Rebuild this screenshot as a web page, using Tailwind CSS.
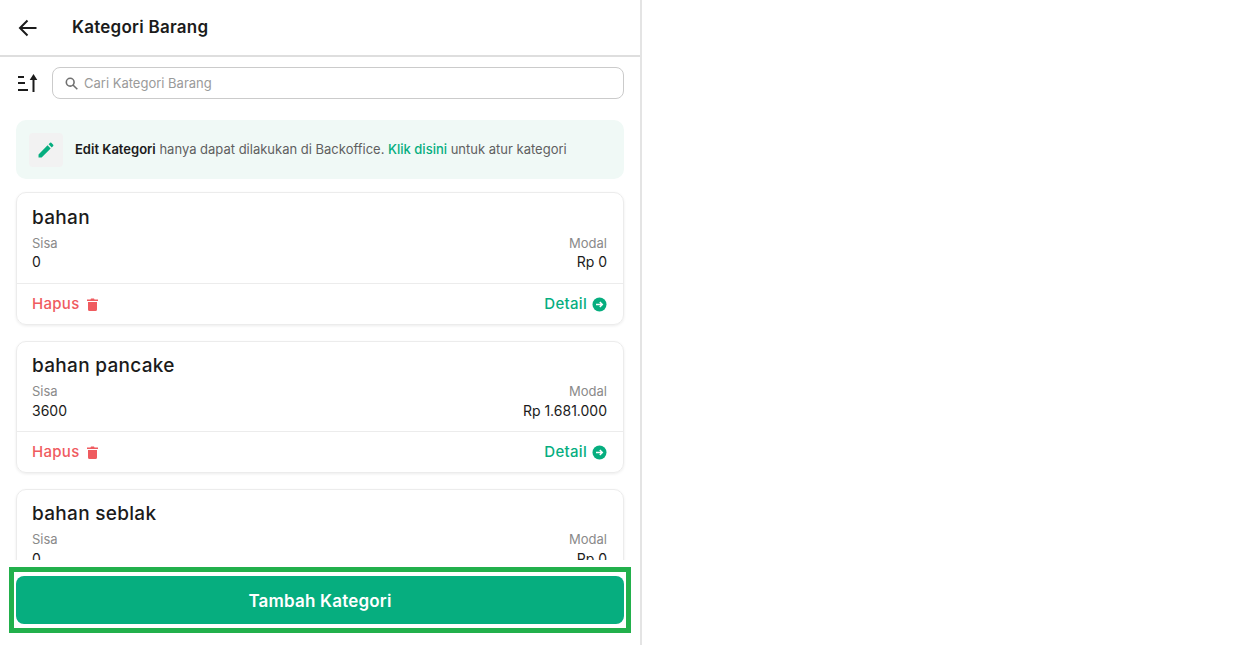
<!DOCTYPE html>
<html lang="en">
<head>
    <meta charset="UTF-8">
    <title>Kategori Barang</title>
    <script src="https://cdn.jsdelivr.net/npm/@tailwindcss/browser@4"></script>
</head>
<body class="bg-white h-screen overflow-hidden font-['Inter',sans-serif] text-[#1b1b1b]">
    <div class="w-[642px] h-[645px] border-r-2 border-[#e4e4e4] flex flex-col">
        <!-- header -->
        <div class="h-[57px] shrink-0 border-b-2 border-[#dedede] flex items-center pl-[18px]">
            <svg class="w-[20px] h-[20px]" viewBox="0 0 20 20" fill="none" stroke="#1b1b1b" stroke-width="2"><path d="M18.5 10H2.5M9.5 2.5L2 10l7.5 7.5"/></svg>
            <h1 class="ml-[34px] text-[17px] font-semibold tracking-[0.25px]">Kategori Barang</h1>
        </div>

        <div class="flex-1 overflow-hidden px-4">
            <!-- search -->
            <div class="flex items-center h-[32px] mt-[10px] gap-[13px]">
                <svg class="w-[23px] h-[20px] shrink-0" viewBox="0 0 23 20" fill="#1b1b1b"><rect x="2" y="3" width="6" height="2"/><rect x="2" y="9" width="7" height="2"/><rect x="2" y="16" width="10" height="2"/><path d="M16.500 19V6h2v13zM17.500 1l3.800 6h-7.600z"/></svg>
                <div class="flex-1 h-[32px] border-[1.5px] border-[#cbcbcb] rounded-[8px] flex items-center pl-[12px] gap-[6px]">
                    <svg class="w-[13px] h-[13px]" viewBox="0 0 13 13" fill="none" stroke="#707070" stroke-width="1.6"><circle cx="5.2" cy="5.2" r="3.9"/><path d="M8 8l4.3 4.3"/></svg>
                    <span class="text-[13px] text-[#9a9a9a] pt-[2px]">Cari Kategori Barang</span>
                </div>
            </div>

            <!-- info banner -->
            <div class="mt-[21px] h-[59px] bg-[#f0f9f6] rounded-[10px] flex items-center pl-[13px] gap-[12px]">
                <div class="w-[34px] h-[34px] bg-[#f2f2f2] rounded-[4px] flex items-center justify-center">
                    <svg class="w-[17px] h-[17px]" viewBox="0 0 16 16" fill="#06ae7f"><path d="M.5 12.6V15.5h2.9l8.5-8.5-2.9-2.9zM14.3 4.6a.8.8 0 000-1.1L12.5 1.7a.8.8 0 00-1.1 0L10 3.1 12.9 6z"/></svg>
                </div>
                <p class="text-[13px] text-[#5f5f5f]"><b class="font-semibold text-[#1b1b1b]">Edit Kategori</b> hanya dapat dilakukan di Backoffice. <span class="text-[#06ae7f] font-medium">Klik disini</span> untuk atur kategori</p>
            </div>

            <!-- cards -->
            <div class="mt-[13px] flex flex-col gap-[16px]">
                <div class="h-[133px] shrink-0 border border-[#ececec] rounded-[10px] shadow-[0_1px_3px_rgba(0,0,0,0.08)]">
                    <div class="h-[91px] pl-[15px] pr-[16px] pt-[12px] border-b border-[#ececec]">
                        <div class="text-[19px] font-medium leading-[26px] tracking-[0.3px]">bahan</div>
                        <div class="flex justify-between text-[13px] text-[#8a8a8a] mt-[3px] leading-[18px]"><span>Sisa</span><span>Modal</span></div>
                        <div class="flex justify-between text-[14px] leading-[20px]"><span>0</span><span>Rp 0</span></div>
                    </div>
                    <div class="h-[40px] pl-[15px] pr-[16px] flex items-center justify-between text-[15px] font-medium tracking-[0.3px]">
                        <span class="flex items-center gap-[7px] text-[#ef5b5f]">Hapus
                            <svg class="w-[11px] h-[13px]" viewBox="0 0 11 13" fill="#ef5b5f"><path d="M1 4h9v7.5A1.5 1.5 0 018.5 13h-6A1.5 1.5 0 011 11.500zM0 1.500h3.500L4 .5h3l.5 1H11V3H0z"/></svg>
                        </span>
                        <span class="flex items-center gap-[5px] text-[#06ae7f]">Detail
                            <svg class="w-[15px] h-[15px]" viewBox="0 0 15 15"><circle cx="7.500" cy="7.500" r="7" fill="#06ae7f"/><path d="M4 7.500h6M7.800 5l2.500 2.500L7.800 10" fill="none" stroke="#fff" stroke-width="1.500"/></svg>
                        </span>
                    </div>
                </div>

                <div class="h-[132px] shrink-0 border border-[#ececec] rounded-[10px] shadow-[0_1px_3px_rgba(0,0,0,0.08)]">
                    <div class="h-[90px] pl-[15px] pr-[16px] pt-[11px] border-b border-[#ececec]">
                        <div class="text-[19px] font-medium leading-[26px] tracking-[0.3px]">bahan pancake</div>
                        <div class="flex justify-between text-[13px] text-[#8a8a8a] mt-[3px] leading-[18px]"><span>Sisa</span><span>Modal</span></div>
                        <div class="flex justify-between text-[14px] mt-[1px] leading-[20px]"><span>3600</span><span>Rp 1.681.000</span></div>
                    </div>
                    <div class="h-[40px] pl-[15px] pr-[16px] flex items-center justify-between text-[15px] font-medium tracking-[0.3px]">
                        <span class="flex items-center gap-[7px] text-[#ef5b5f]">Hapus
                            <svg class="w-[11px] h-[13px]" viewBox="0 0 11 13" fill="#ef5b5f"><path d="M1 4h9v7.5A1.5 1.5 0 018.5 13h-6A1.5 1.5 0 011 11.500zM0 1.500h3.500L4 .5h3l.5 1H11V3H0z"/></svg>
                        </span>
                        <span class="flex items-center gap-[5px] text-[#06ae7f]">Detail
                            <svg class="w-[15px] h-[15px]" viewBox="0 0 15 15"><circle cx="7.500" cy="7.500" r="7" fill="#06ae7f"/><path d="M4 7.500h6M7.800 5l2.500 2.500L7.800 10" fill="none" stroke="#fff" stroke-width="1.500"/></svg>
                        </span>
                    </div>
                </div>

                <div class="h-[133px] shrink-0 border border-[#ececec] rounded-[10px] shadow-[0_1px_3px_rgba(0,0,0,0.08)]">
                    <div class="h-[90px] pl-[15px] pr-[16px] pt-[11px]">
                        <div class="text-[19px] font-medium leading-[26px] tracking-[0.3px]">bahan seblak</div>
                        <div class="flex justify-between text-[13px] text-[#8a8a8a] mt-[3px] leading-[18px]"><span>Sisa</span><span>Modal</span></div>
                        <div class="flex justify-between text-[14px] mt-[1px] leading-[20px]"><span>0</span><span>Rp 0</span></div>
                    </div>
                </div>
            </div>
        </div>

        <!-- footer with highlighted button -->
        <div class="h-[85px] shrink-0 bg-white pt-[7px] pl-[9px] pr-[9px]">
            <div class="h-[66px] border-[5px] border-[#22b04c] px-[2px] pt-[4px]">
                <button class="w-full h-[48px] pt-[3px] bg-[#06ae7f] rounded-[8px] text-white text-[17px] font-semibold tracking-[0.2px]">Tambah Kategori</button>
            </div>
        </div>
    </div>
</body>
</html>
